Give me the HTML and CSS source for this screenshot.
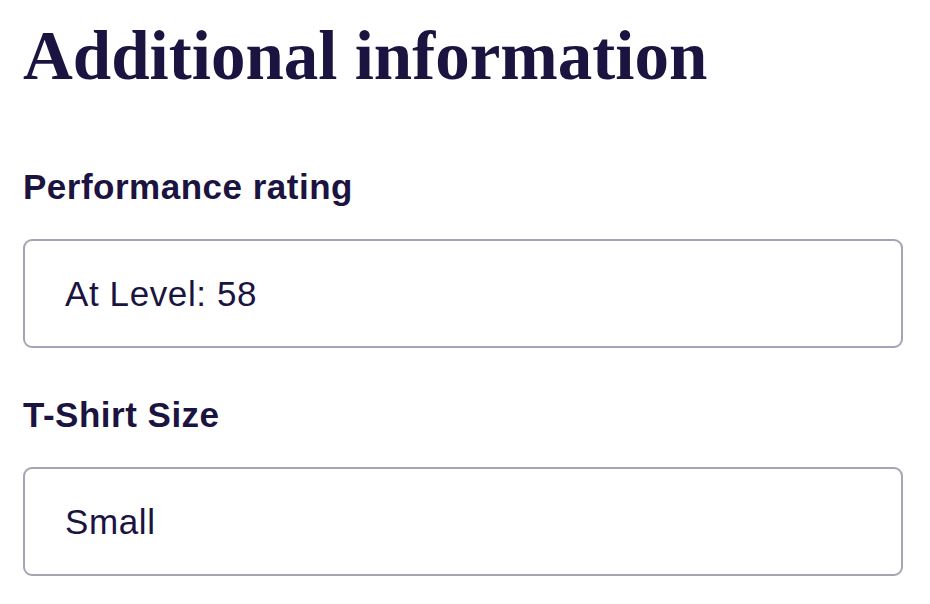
FILE: index.html
```html
<!DOCTYPE html>
<html lang="en">
<head>
  <meta charset="UTF-8" />
  <title>Additional information</title>
  <link rel="stylesheet" href="styles.css">
</head>
<body>
  <section class="info">
    <h1>Additional information</h1>

    <div class="field">
      <label class="field-label">Performance rating</label>
      <div class="field-value">At Level: 58</div>
    </div>

    <div class="field">
      <label class="field-label">T-Shirt Size</label>
      <div class="field-value">Small</div>
    </div>
  </section>
</body>
</html>
```

FILE: styles.css
```css
body {
  margin: 0;
  background-color: #fff;
  color: #1b1340;
  font-family: 'Liberation Sans', Arial, sans-serif;
}

.info {
  display: flex;
  flex-direction: column;
  padding: 16px 27px 0 23px;
}

h1 {
  margin: 0 0 71px;
  font-family: 'Liberation Serif', 'Times New Roman', serif;
  font-size: 69px;
  line-height: 80px;
  font-weight: bold;
}

.field {
  display: flex;
  flex-direction: column;
  margin-bottom: 47px;
}

.field-label {
  margin-bottom: 32px;
  font-size: 35px;
  line-height: 40px;
  font-weight: bold;
  letter-spacing: 0.5px;
}

.field-value {
  display: flex;
  align-items: center;
  height: 109px;
  box-sizing: border-box;
  padding: 0 40px;
  border: 2px solid #a6a3b4;
  border-radius: 9px;
  font-size: 35px;
  letter-spacing: 0.6px;
}
```
